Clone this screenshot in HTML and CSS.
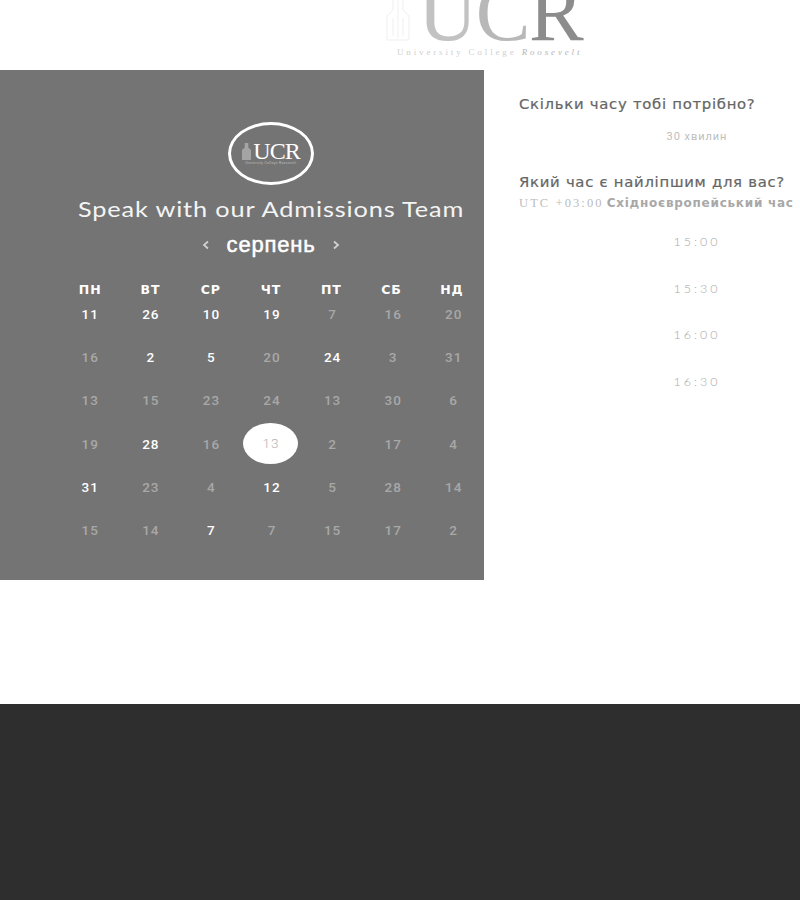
FILE: index.html
```html
<!DOCTYPE html>
<html lang="uk">
<head>
<meta charset="utf-8">
<title>Speak with our Admissions Team</title>
<link rel="stylesheet" href="styles.css">
</head>
<body>
<div class="page">
  <header class="top">
    <div class="brand">
      <svg class="tower" viewBox="0 0 26 50" width="26" height="50" aria-hidden="true">
        <path d="M2 46V22L8 16V6M24 46V22L18 16V0M8 24V42M13 0V44M18 24V42M2 46H24" fill="none" stroke="#efefef" stroke-width="1"/>
      </svg>
      <div class="brand-text">
        <div class="brand-name"><span class="u">U</span><span class="c">C</span><span class="r">R</span></div>
        <div class="brand-sub">University College <i>Roosevelt</i></div>
      </div>
    </div>
  </header>
  <main class="booking">
    <section class="panel">
      <div class="badge">
        <div class="badge-row">
          <svg class="badge-tower" viewBox="0 0 10 20" width="9" height="18" aria-hidden="true">
            <path d="M0 20V9L3 6V1H7V6L10 9V20Z" fill="#a4a4a4"/>
          </svg>
          <div class="badge-name">UCR</div>
        </div>
        <div class="badge-sub">University College Roosevelt</div>
      </div>
      <h1 class="title">Speak with our Admissions Team</h1>
      <div class="month">
        <svg class="arrow" viewBox="0 0 8 10" width="8" height="10" aria-hidden="true"><path d="M6 1.5 2 5l4 3.5" fill="none" stroke="#d0d0d0" stroke-width="1.8"/></svg>
        <span class="month-name">серпень</span>
        <svg class="arrow" viewBox="0 0 8 10" width="8" height="10" aria-hidden="true"><path d="M2 1.5 6 5 2 8.5" fill="none" stroke="#d0d0d0" stroke-width="1.8"/></svg>
      </div>
      <div class="weekdays">
        <span>ПН</span><span>ВТ</span><span>СР</span><span>ЧТ</span><span>ПТ</span><span>СБ</span><span>НД</span>
      </div>
      <div class="days">
        <span class="on">11</span><span class="on">26</span><span class="on">10</span><span class="on">19</span><span>7</span><span>16</span><span>20</span>
        <span>16</span><span class="on">2</span><span class="on">5</span><span>20</span><span class="on">24</span><span>3</span><span>31</span>
        <span>13</span><span>15</span><span>23</span><span>24</span><span>13</span><span>30</span><span>6</span>
        <span>19</span><span class="on">28</span><span>16</span><span class="picked"><b>13</b></span><span>2</span><span>17</span><span>4</span>
        <span class="on">31</span><span>23</span><span>4</span><span class="on">12</span><span>5</span><span>28</span><span>14</span>
        <span>15</span><span>14</span><span class="on">7</span><span>7</span><span>15</span><span>17</span><span>2</span>
      </div>
    </section>
    <aside class="side">
      <h2 class="question">Скільки часу тобі потрібно?</h2>
      <div class="duration">30 хвилин</div>
      <h2 class="question second">Який час є найліпшим для вас?</h2>
      <div class="zone"><span class="utc">UTC +03:00</span> <span class="zone-name">Східноєвропейський час</span></div>
      <ul class="slots">
        <li>15:00</li>
        <li>15:30</li>
        <li>16:00</li>
        <li>16:30</li>
      </ul>
    </aside>
  </main>
  <footer class="foot"></footer>
</div>
</body>
</html>
```
FILE: styles.css
```css
html, body { margin: 0; padding: 0; background: #fff; }
.page { width: 800px; height: 900px; overflow: hidden; display: flex; flex-direction: column; }

.top { height: 70px; flex: none; overflow: hidden; display: flex; padding-left: 385px; box-sizing: border-box; }
.brand { display: flex; align-items: flex-start; gap: 7px; }
.tower { flex: none; margin-top: -6px; }
.brand-text { margin-top: -21px; }
.brand-name { font: 82px/68px "Liberation Serif", serif; letter-spacing: -1.5px; white-space: nowrap; }
.u { color: #c2c2c2; }
.c { color: #b8b8b8; }
.r { color: #8c8c8c; }
.brand-sub { font: 9px/10px "Liberation Serif", serif; color: #cfcfcf; letter-spacing: 2.85px; margin-left: -21px; white-space: nowrap; }
.brand-sub i { color: #b5b5b5; }

.booking { display: flex; height: 510px; flex: none; }
.panel { width: 484px; flex: none; box-sizing: border-box; background: #747474; padding: 52px 2px 0 60px; display: flex; flex-direction: column; align-items: stretch; }
.badge { width: 86px; height: 63px; box-sizing: border-box; border: 3px solid #fff; border-radius: 50%; align-self: center; display: flex; flex-direction: column; align-items: center; justify-content: center; }
.badge-row { display: flex; align-items: flex-end; gap: 2px; height: 18px; }
.badge-tower { flex: none; }
.badge-name { font: 24px/18px "Liberation Serif", serif; color: #fff; letter-spacing: -1px; }
.badge-sub { font: 3px/4px "Liberation Sans", sans-serif; color: #c4c4c4; letter-spacing: 0.45px; white-space: nowrap; margin-top: 1px; }
.title { margin: 10px 0 0; font: 400 22px/28px Lato, sans-serif; color: #f4f4f4; text-align: center; letter-spacing: 0.75px; white-space: nowrap; transform: scaleX(1.15); }
.month { display: flex; justify-content: center; align-items: center; gap: 11px; margin-top: 8px; height: 28px; }
.month-name { font: 400 22px/28px "Liberation Sans", sans-serif; color: #fff; -webkit-text-stroke: 0.5px #fff; letter-spacing: 0.8px; margin: 0 6px; }

.weekdays, .days { display: grid; grid-template-columns: repeat(7, 1fr); text-align: center; }
.days { margin-right: -2px; }
.weekdays { margin-top: 23px; font: 700 12.5px/16px "DejaVu Sans", sans-serif; color: #fff; letter-spacing: 0.9px; }
.days { margin-top: 7px; grid-auto-rows: 43.2px; font: 500 13.5px/18px Roboto, sans-serif; color: #a8a8a8; letter-spacing: 1px; }
.days span { display: block; }
.on { color: #fff; }
.picked { position: relative; }
.picked::before { content: ""; position: absolute; left: 1.5px; top: -12px; width: 55px; height: 41px; border-radius: 50%; background: #fff; }
.picked b { position: relative; left: -1px; top: -1px; font-weight: 300; color: #b4b4b4; }

.side { flex: 1; min-width: 0; padding: 25px 0 0 35px; }
.question { margin: 0; font: 400 13.5px/18px "DejaVu Sans", sans-serif; color: #666; letter-spacing: 0.65px; white-space: nowrap; -webkit-text-stroke: 0.2px #666; transform: scaleX(1.1); transform-origin: left center; }
.second { margin-top: 28px; }
.duration { width: 356px; text-align: center; margin-top: 16px; font: 400 11px/16px Roboto, sans-serif; color: #bdbdbd; letter-spacing: 0.95px; }
.zone { font: 12px/18px Roboto, sans-serif; white-space: nowrap; margin-top: 3px; }
.utc { font-family: "Liberation Serif", serif; font-size: 12.5px; color: #bcbcbc; letter-spacing: 2.1px; }
.zone-name { font: 700 12px/18px "DejaVu Sans", sans-serif; color: #a8a8a8; letter-spacing: 0.75px; }
.slots { list-style: none; margin: 21px 0 0; padding: 0; width: 356px; text-align: center; font: 300 12.5px/18px Lato, sans-serif; color: #a8a8a8; letter-spacing: 3px; }
.slots li { height: 46.6px; }

.foot { margin-top: 124px; flex: 1; background: #2e2e2e; }
```
